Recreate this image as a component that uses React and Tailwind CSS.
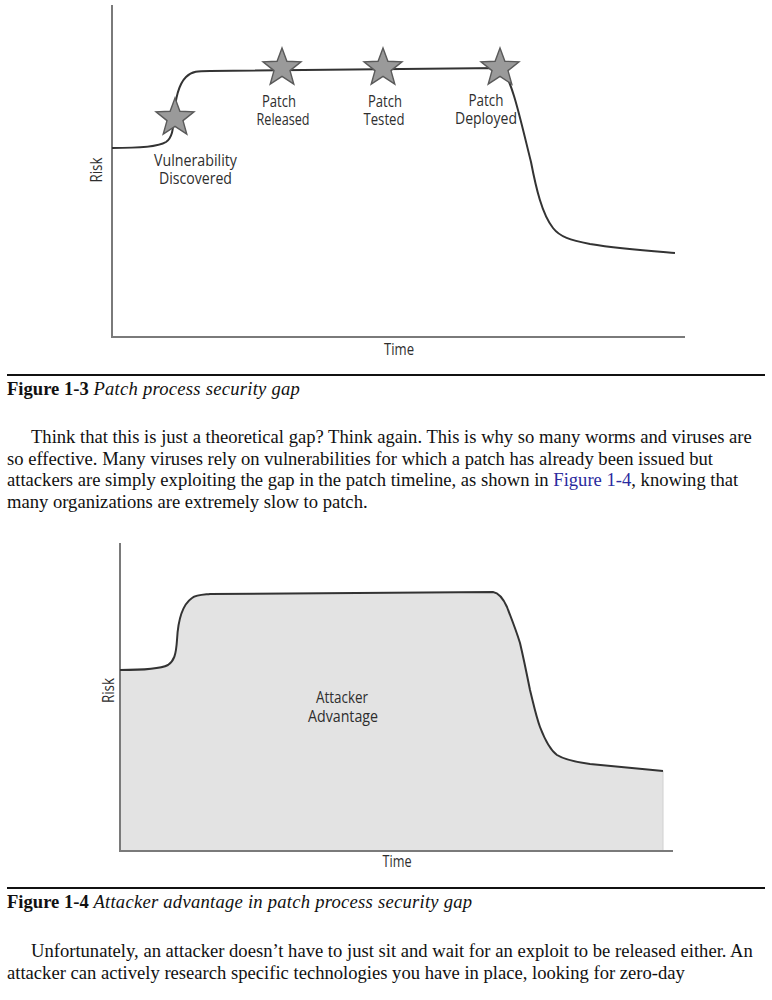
import React from 'react'

// five-pointed star polygon centred on (cx, cy)
function starPoints(cx, cy, r) {
  const inner = r * 0.42
  const pts = []
  for (let i = 0; i < 10; i++) {
    const rad = i % 2 === 0 ? r : inner
    const a = -Math.PI / 2 + (i * Math.PI) / 5
    pts.push(`${(cx + rad * Math.cos(a)).toFixed(1)},${(cy + rad * Math.sin(a)).toFixed(1)}`)
  }
  return pts.join(' ')
}

function Label({ x, y, w, children, size = 16 }) {
  return (
    <text x={x} y={y} textAnchor="middle" textLength={w} lengthAdjust="spacingAndGlyphs" fontSize={size} fill="#2e2e2e" fontFamily="'Open Sans', Lato, sans-serif">
      {children}
    </text>
  )
}

function Star({ x, y }) {
  return <polygon points={starPoints(x, y, 20)} fill="#9a9a9a" stroke="#5a5a5a" strokeWidth="1.4" strokeLinejoin="miter" />
}

function PatchGapChart() {
  return (
    <svg width="772" height="365" viewBox="0 0 772 365" className="block">
      <line x1="112" y1="5" x2="112" y2="338" stroke="#7a7a7a" strokeWidth="2" />
      <line x1="111" y1="337" x2="685" y2="337" stroke="#7a7a7a" strokeWidth="2" />
      <path
        d="M112,148 C140,148 158,147 166,142 C172,138 173,130 174,118 C175,100 178,85 186,77 C192,71 198,71 210,71 L500,68 C505,70 509,80 514,96 C519,112 525,138 531,162 C536,188 542,214 553,228 C560,237 570,240 590,244 C620,249 650,251 675,253"
        fill="none" stroke="#333" strokeWidth="2"
      />
      <Star x={175} y={118} />
      <Star x={282} y={68} />
      <Star x={383} y={68} />
      <Star x={500} y={68} />
      <Label x={195.5} y={166} w={83}>Vulnerability</Label>
      <Label x={195.5} y={184} w={73}>Discovered</Label>
      <Label x={279} y={107} w={34}>Patch</Label>
      <Label x={283} y={125} w={53}>Released</Label>
      <Label x={385} y={107} w={34}>Patch</Label>
      <Label x={384} y={125} w={41}>Tested</Label>
      <Label x={486} y={106} w={35}>Patch</Label>
      <Label x={486} y={124} w={62}>Deployed</Label>
      <Label x={399} y={355} w={30}>Time</Label>
      <g transform="translate(102,170) rotate(-90)">
        <Label x={0} y={0} w={25}>Risk</Label>
      </g>
    </svg>
  )
}

function AdvantageChart() {
  const curve =
    'M120,670 C140,670 160,669 168,665 C174,661 176,655 177,640 C178,620 182,605 192,598 C196,595 200,595 210,594 L493,592 C499,593 503,598 507,607 C512,620 516,630 520,643 C524,660 527,675 530,690 C534,706 536,716 540,727 C545,740 550,750 557,755 C565,760 575,762 590,764 C620,767 640,769 663,771'
  return (
    <svg width="772" height="368" viewBox="0 512 772 368" className="block">
      <path d={`${curve} L663,851 L120,851 Z`} fill="#e3e3e3" />
      <line x1="663" y1="771" x2="663" y2="851" stroke="#d0d0d0" strokeWidth="1" />
      <line x1="120" y1="543" x2="120" y2="852" stroke="#7a7a7a" strokeWidth="2" />
      <line x1="119" y1="851" x2="673" y2="851" stroke="#7a7a7a" strokeWidth="2" />
      <path d={curve} fill="none" stroke="#333" strokeWidth="2" />
      <Label x={342} y={703} w={52}>Attacker</Label>
      <Label x={343} y={722} w={70}>Advantage</Label>
      <Label x={397} y={867} w={29}>Time</Label>
      <g transform="translate(114,690.5) rotate(-90)">
        <Label x={0} y={0} w={25}>Risk</Label>
      </g>
    </svg>
  )
}

export default function App() {
  return (
    <div className="w-[772px] bg-white text-[#111] font-['Liberation_Serif','Times_New_Roman',serif]">
      <PatchGapChart />
      <div className="mx-[7px] mt-[9px] h-[2px] bg-[#111]" />
      <p className="mx-[7px] mt-[2px] text-[18.6px] leading-[21px]">
        <b>Figure 1-3</b> <i className="tracking-[0.25px]">Patch process security gap</i>
      </p>
      <p className="mx-[7px] mt-[27px] w-[758px] text-[18.6px] leading-[21.5px] indent-[24px]">
        Think that this is just a theoretical gap? Think again. This is why so many worms and viruses are so effective. Many viruses rely on vulnerabilities for which a patch has already been issued but attackers are simply exploiting the gap in the patch timeline, as shown in <span className="text-[#2a2a9e]">Figure 1-4</span>, knowing that many organizations are extremely slow to patch.
      </p>
      <AdvantageChart />
      <div className="mx-[7px] mt-[7px] h-[2px] bg-[#111]" />
      <p className="mx-[7px] mt-[2px] text-[18.6px] leading-[21px]">
        <b>Figure 1-4</b> <i className="tracking-[0.25px]">Attacker advantage in patch process security gap</i>
      </p>
      <p className="mx-[7px] mt-[28px] w-[758px] text-[18.6px] leading-[21.5px] indent-[24px]">
        Unfortunately, an attacker doesn’t have to just sit and wait for an exploit to be released either. An attacker can actively research specific technologies you have in place, looking for zero-day
      </p>
    </div>
  )
}
